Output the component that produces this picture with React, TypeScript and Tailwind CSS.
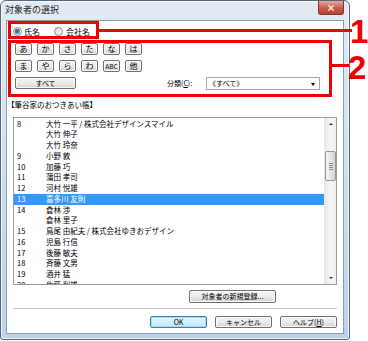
import React from "react";

const rows: [string, string][] = [
  ["8", "大竹 一平 / 株式会社デザインスマイル"],
  ["", "大竹 伸子"],
  ["", "大竹 玲奈"],
  ["9", "小野 敦"],
  ["10", "加藤 巧"],
  ["11", "蒲田 孝司"],
  ["12", "河村 悦雄"],
  ["13", "喜多川 友則"],
  ["14", "倉林 渉"],
  ["", "倉林 里子"],
  ["15", "鳥尾 由紀夫 / 株式会社ゆきおデザイン"],
  ["16", "児島 行信"],
  ["17", "後藤 敏夫"],
  ["18", "斉藤 文男"],
  ["19", "酒井 猛"],
  ["20", "佐藤 利雄"],
];

function KanaBtn({ label, small }: { label: string; small?: boolean }) {
  return (
    <div
      className={`flex h-[12px] w-[17px] items-center justify-center rounded-[2px] border border-[#707070] bg-gradient-to-b from-[#f4f4f4] via-[#ebebeb] to-[#d3d3d3] shadow-[inset_0_0_0_1px_rgba(255,255,255,0.8)] ${
        small ? "text-[6.5px]" : "text-[8px]"
      } leading-none text-black`}
    >
      {label}
    </div>
  );
}

function Radio({ checked }: { checked?: boolean }) {
  return (
    <div className="flex h-[9px] w-[9px] items-center justify-center rounded-full border border-[#8c8c8c] bg-gradient-to-br from-[#d4d4d4] to-[#fbfbfb]">
      {checked && <div className="h-[5px] w-[5px] rounded-full bg-gradient-to-br from-[#1d4f8f] to-[#5d9ad8]" />}
    </div>
  );
}

function Btn({ children, focused, w }: { children: React.ReactNode; focused?: boolean; w: string }) {
  return (
    <div
      className={`flex h-[12px] ${w} items-center justify-center rounded-[2px] border ${
        focused
          ? "border-[#3c7fb1] bg-gradient-to-b from-[#eaf6fd] to-[#bee6fd] shadow-[inset_0_0_0_1px_#a7d9f5]"
          : "border-[#707070] bg-gradient-to-b from-[#f4f4f4] via-[#ebebeb] to-[#d3d3d3] shadow-[inset_0_0_0_1px_rgba(255,255,255,0.8)]"
      } text-[7px] leading-none text-black`}
    >
      {children}
    </div>
  );
}

export default function App() {
  return (
    <div className="relative h-[341px] w-[368px] overflow-hidden bg-white font-['Noto_Sans_CJK_JP','Noto_Sans',sans-serif]">
      {/* Window */}
      <div className="flex h-[340px] w-[350px] flex-col rounded-t-[6px] rounded-b-[3px] border border-[#55677a] bg-gradient-to-b from-[#e3eaf2] to-[#bcd2e9] shadow-[inset_0_0_0_1px_rgba(255,255,255,0.7)]">
        {/* Title bar */}
        <div className="flex h-[19px] items-start">
          <div className="pl-[4px] pt-[3px] text-[9px] leading-[12px] text-[#1e1e1e]">対象者の選択</div>
          <div className="ml-auto mr-[5px] flex h-[14px] w-[26px] items-center justify-center rounded-b-[3px] border border-t-0 border-[#7a3a32] bg-gradient-to-b from-[#e8a899] via-[#c9604f] to-[#b8432f] text-[9px] font-bold leading-none text-white">
            ×
          </div>
        </div>
        {/* Client */}
        <div className="mx-[5px] mb-[5px] flex-1 border border-[#8a9fb6] bg-white">
          <div className="flex flex-col px-[6px]">
            {/* radio row */}
            <div className="mt-[6px] flex h-[9px] items-center text-[8px] leading-none text-black">
              <Radio checked />
              <span className="ml-[2px]">氏名</span>
              <div className="ml-[14px]">
                <Radio />
              </div>
              <span className="ml-[3px]">会社名</span>
            </div>
            {/* kana row 1 */}
            <div className="ml-[2px] mt-[7px] flex gap-[5px]">
              {["あ", "か", "さ", "た", "な", "は"].map((k) => (
                <KanaBtn key={k} label={k} />
              ))}
            </div>
            <div className="ml-[2px] mt-[5px] flex gap-[5px]">
              {["ま", "や", "ら", "わ"].map((k) => (
                <KanaBtn key={k} label={k} />
              ))}
              <KanaBtn label="ABC" small />
              <KanaBtn label="他" />
            </div>
            <div className="mt-[5px] flex h-[13px] items-start">
              <div className="ml-[2px]">
                <Btn w="w-[61px]">すべて</Btn>
              </div>
              <div className="ml-[91px] mt-[2px] w-[39px] text-[7px] leading-[9px] text-black">
                分類(<span className="underline">C</span>):
              </div>
              <div className="relative flex h-[13px] w-[114px] items-center border border-[#a9a9a9] bg-white pl-[2px] text-[7px] leading-none text-black">
                《すべて》
                <div className="absolute right-[4px] top-[5px] h-0 w-0 border-x-[2.5px] border-t-[3px] border-x-transparent border-t-black" />
              </div>
            </div>
            {/* label */}
            <div className="-ml-[6px] mt-[10px] text-[7.5px] leading-[10px] text-black">【筆谷家のおつきあい帳】</div>
            {/* list */}
            <div className="mt-[7px] flex h-[168px] border border-[#9b9b9b] bg-white">
              <div className="flex-1 overflow-hidden pt-[0.6px]">
                {rows.map(([n, name], i) => {
                  const sel = i === 7;
                  return (
                    <div
                      key={i}
                      className={`flex h-[10.75px] items-center whitespace-nowrap text-[7.5px] leading-[10.75px] ${
                        sel ? "bg-[#3399ff] text-white" : "text-black"
                      }`}
                    >
                      <span className="w-[32px] shrink-0 pl-[3px]">{n}</span>
                      <span>{name}</span>
                    </div>
                  );
                })}
              </div>
              {/* scrollbar */}
              <div className="flex w-[12px] flex-col border-l border-[#e6e6e6] bg-gradient-to-r from-[#e9e9e9] via-[#f7f7f7] to-[#efefef]">
                <div className="flex h-[12px] items-center justify-center">
                  <div className="h-0 w-0 border-x-[2px] border-b-[2px] border-x-transparent border-b-[#333]" />
                </div>
                <div className="mt-[21px] flex h-[30px] w-[11px] flex-col items-center justify-center gap-[1px] rounded-[2px] border border-[#969696] bg-gradient-to-r from-[#f6f6f6] to-[#d5d5d5]">
                  <div className="h-px w-[4px] bg-[#8a8a8a]" />
                  <div className="h-px w-[4px] bg-[#8a8a8a]" />
                  <div className="h-px w-[4px] bg-[#8a8a8a]" />
                  <div className="h-px w-[4px] bg-[#8a8a8a]" />
                </div>
                <div className="mt-auto flex h-[12px] items-center justify-center">
                  <div className="h-0 w-0 border-x-[2px] border-t-[2px] border-x-transparent border-t-[#333]" />
                </div>
              </div>
            </div>
            {/* new registration */}
            <div className="ml-[176px] mt-[5px]">
              <Btn w="w-[87px] h-[13px]">対象者の新規登録...</Btn>
            </div>
            <div className="mt-[5px] h-px bg-[#c9c9c9] shadow-[0_1px_0_#ffffff]" />
            <div className="mt-[7px] flex justify-end gap-[8px]">
              <Btn w="w-[57px]" focused>
                OK
              </Btn>
              <Btn w="w-[57px]">キャンセル</Btn>
              <Btn w="w-[57px]">
                ヘルプ(<span className="underline">H</span>)
              </Btn>
            </div>
          </div>
        </div>
      </div>

      {/* Callouts */}
      <div className="absolute left-[8px] top-[21px] h-[18px] w-[91px] border-[3px] border-[#ee0000]" />
      <div className="absolute left-[8px] top-[40px] h-[57px] w-[324px] border-[3px] border-[#ee0000]" />
      <div className="absolute left-[98px] top-[29px] h-[3px] w-[254px] bg-[#ee0000]" />
      <div className="absolute left-[331px] top-[64px] h-[3px] w-[18px] bg-[#ee0000]" />
      <div className="absolute left-[350px] top-[15px] font-['Liberation_Sans',sans-serif] text-[33px] font-bold leading-none text-[#ee0000]">
        1
      </div>
      <div className="absolute left-[348px] top-[51px] font-['Liberation_Sans',sans-serif] text-[33px] font-bold leading-none text-[#ee0000]">
        2
      </div>
    </div>
  );
}
